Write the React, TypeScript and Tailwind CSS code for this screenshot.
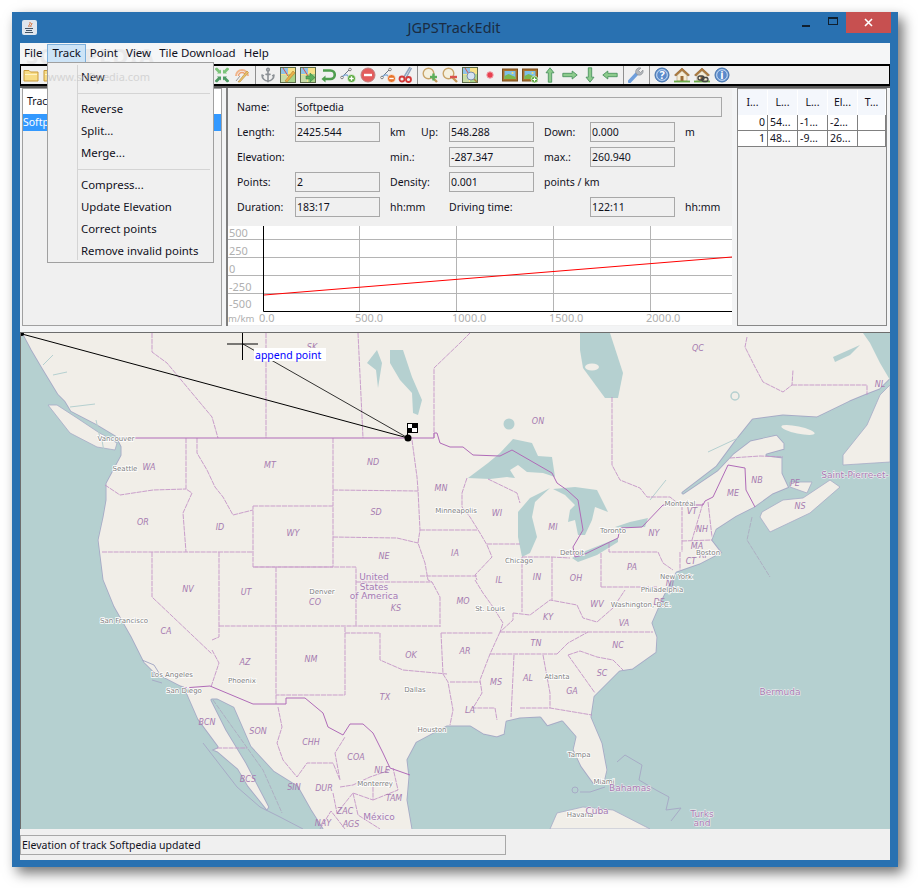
import type { ReactNode } from 'react'
import { Anchor } from 'lucide-react'

const LAND = '#f1eee8'
const WATER = '#b5d0d0'

const Ic = ({ children, w = 16 }: { children: ReactNode; w?: number }) => (
  <svg width={w} height={16} viewBox="0 0 16 16" fill="none">{children}</svg>
)

const Btn = ({ children, narrow }: { children: ReactNode; narrow?: boolean }) => (
  <div className={`flex shrink-0 items-center justify-center ${narrow ? 'w-[16px]' : 'w-[20px]'}`}>{children}</div>
)

const Sep = () => (
  <div className="flex w-[6px] shrink-0 justify-center"><div className="h-[18px] w-px bg-[#8f8f8f]" /></div>
)

const Folder = () => (
  <Ic>
    <path d="M1 3.500h5l1.500 1.500H15v9H1z" fill="#f7dc85" stroke="#c99a3a" />
    <path d="M2 7h12v1H2z" fill="#fff3c4" />
  </Ic>
)

const ArrowsIn = () => (
  <Ic>
    <path d="M1 1.500l2-1 3 3 1-1v4H3l1-1-3-3z" fill="#7cc47a" />
    <path d="M15 1.500l-2-1-3 3-1-1v4h4l-1-1 3-3z" fill="#7cc47a" />
    <path d="M1 14.500l2 1 3-3 1 1v-4H3l1 1-3 3z" fill="#4e9a63" />
    <path d="M15 14.500l-2 1-3-3-1 1v-4h4l-1 1 3 3z" fill="#4e9a63" />
  </Ic>
)

const Radar = () => (
  <Ic>
    <path d="M2 9a6 6 0 0 1 12 0" stroke="#f0b48a" strokeWidth="2" />
    <path d="M4.500 9a3.500 3.500 0 0 1 7 0" stroke="#eea070" strokeWidth="1.500" />
    <path d="M4 15L13 4l1.500 1.500L6 15z" fill="#e9c46a" stroke="#b8863a" strokeWidth=".6" />
    <path d="M2 14l4-5" stroke="#9a9a9a" />
  </Ic>
)

const MapTile = ({ children }: { children?: ReactNode }) => (
  <Ic>
    <rect x=".5" y=".5" width="15" height="15" fill="#f7e28a" stroke="#5f6e4c" />
    <rect x="1" y="1" width="7" height="6" fill="#8fc3e8" />
    <rect x="8" y="7" width="7" height="8" fill="#a9d48a" />
    <rect x="1" y="8" width="6" height="7" fill="#c8dca8" />
    <path d="M3 1l5 8" stroke="#d9534f" />
    {children}
  </Ic>
)

const Route = ({ plus }: { plus: boolean }) => (
  <Ic>
    <path d="M1 11L10 2" stroke="#6d7680" />
    <path d="M2 10c3-3 6-3 7 1" stroke="#7fa9d6" strokeWidth="1.400" />
    <circle cx="2" cy="10.500" r="1.300" fill="#fff" stroke="#555" strokeWidth=".7" />
    <circle cx="10" cy="2.500" r="1.300" fill="#fff" stroke="#555" strokeWidth=".7" />
    <circle cx="11.500" cy="11.500" r="4" fill={plus ? '#5aa83e' : '#e8742c'} stroke="#fff" strokeWidth=".6" />
    <path d="M9.300 11.500h4.400" stroke="#fff" strokeWidth="1.400" />
    {plus && <path d="M11.500 9.300v4.400" stroke="#fff" strokeWidth="1.400" />}
  </Ic>
)

const Lens = ({ plus }: { plus: boolean }) => (
  <Ic>
    <path d="M10 10l5 5" stroke="#c69a5a" strokeWidth="2.400" />
    <circle cx="6.500" cy="6.500" r="5.300" fill="#f5f1df" stroke="#c9a56a" strokeWidth="1.400" />
    <path d="M8 10h7" stroke={plus ? '#5cae5c' : '#d9534f'} strokeWidth="2.400" />
    {plus && <path d="M11.500 6.500v7" stroke="#5cae5c" strokeWidth="2.400" />}
  </Ic>
)

const Picture = ({ plus }: { plus?: boolean }) => (
  <Ic>
    <rect x=".5" y="2" width="15" height="12" fill="#a9712b" stroke="#7c4f1d" />
    <rect x="2.500" y="4" width="11" height="8" fill="#7fc0e6" />
    <path d="M2.500 12V9l4-2 7 3v2z" fill="#7bb84c" />
    <circle cx="10.500" cy="6" r="1" fill="#f6e27a" />
    {plus && (
      <>
        <circle cx="12.500" cy="12.500" r="3.400" fill="#5aa83e" stroke="#fff" strokeWidth=".6" />
        <path d="M10.500 12.500h4M12.500 10.500v4" stroke="#fff" strokeWidth="1.200" />
      </>
    )}
  </Ic>
)

const Arrow = ({ rot }: { rot: number }) => (
  <Ic>
    <g transform={`rotate(${rot} 8 8)`}>
      <path d="M8 .8l4 5H9.700v9.400H6.300V5.800H4z" fill="#8ccb8c" stroke="#3f8a55" strokeWidth=".8" />
    </g>
  </Ic>
)

const Globe = ({ children }: { children: ReactNode }) => (
  <Ic>
    <circle cx="8" cy="8" r="7" fill="#6d9bd6" stroke="#3f6ea8" />
    <circle cx="8" cy="8" r="5.300" fill="#5a8acb" stroke="#dce8f6" strokeWidth=".8" />
    {children}
  </Ic>
)

const Home = ({ link }: { link?: boolean }) => (
  <Ic>
    <path d="M8 1L.5 8 2 9 8 3.500 14 9l1.500-1z" fill="#b07a3a" stroke="#7c5220" strokeWidth=".5" />
    <path d="M3 8.500L8 4l5 4.500V14H3z" fill="#f5ecd6" stroke="#a58a62" strokeWidth=".5" />
    <rect x="6.500" y="9" width="3" height="5" fill="#9a6a35" />
    <path d="M0 14.500h16" stroke="#6cab4a" strokeWidth="1.800" />
    {link && (
      <>
        <rect x="4" y="9" width="6" height="4" rx="2" fill="none" stroke="#444" strokeWidth="1.300" />
        <rect x="8" y="10.500" width="6" height="4" rx="2" fill="none" stroke="#444" strokeWidth="1.300" />
      </>
    )}
  </Ic>
)

const water1 =
  '21,333 30,350 40,367 57,395 64,402 70,412 95,425 115,437 120,447 120,455 105,483 105,500 102,517 97,540 102,580 113,607 130,637 143,663 153,673 180,687 183,688 197,720 217,747 210,750 217,753 237,770 247,787 267,812 270,807 247,763 227,730 212,700 217,700 233,708 250,747 273,772 297,787 310,810 322,829 20,829 20,333'
const water2 =
  '413,829 408,800 410,777 408,760 417,743 447,727 470,727 483,735 497,738 505,735 507,722 520,719 540,718 547,727 562,722 575,737 572,750 580,767 593,785 605,783 608,770 603,743 592,717 595,697 620,672 633,670 657,653 658,637 653,623 663,600 673,580 677,573 700,565 723,553 713,540 717,530 737,517 755,508 773,495 790,488 783,473 783,457 767,455 785,450 785,443 777,434 750,440 733,453 717,470 683,493 717,467 737,440 753,420 783,416 817,418 850,402 867,395 880,390 890,380 890,829'

const lakes = [
  '468,478 488,463 500,453 513,439 532,443 538,456 552,457 555,477 543,473 527,472 518,465 510,470 515,478 507,477 490,479',
  '518,512 530,498 550,488 535,502 532,517 537,537 530,553 522,557 518,537',
  '553,489 575,487 597,490 608,512 595,507 592,520 585,535 578,535 575,520 568,522 570,510 575,505 565,495',
  '572,558 583,552 618,538 618,542 597,555 578,562',
  '615,527 630,522 648,518 645,527 623,528',
  '390,350 403,350 412,377 422,400 418,415 413,413 412,393 400,380 390,363',
  '367,363 377,350 382,363 378,388 376,370',
  '580,333 610,333 623,373 618,398 605,398 583,368 580,350',
  '863,333 890,333 890,380 880,363 870,343',
  '833,357 860,345 850,355 835,362',
]

const islands = [
  '48,405 57,405 77,418 98,432 117,443 115,450 97,447 70,433',
  '760,517 770,532 810,513 840,487 830,480 803,498 783,500 762,512',
  '880,395 890,385 890,462 843,465 843,455 867,425',
  '790,482 812,482 807,493 790,487',
  '550,829 557,813 583,807 613,810 650,829',
]

const intl = [
  '120,438 434,438 434,433 437,433 440,443 450,447 463,447 473,455 500,456 512,450 552,473 557,483 567,490 578,500 583,530 573,547 575,557 583,555 618,538 620,528 642,527 663,505 703,505 705,501 713,497 728,465 745,468 746,490 755,507',
  '183,688 210,686 253,704 286,704 286,698 305,698 323,713 328,727 343,735 350,724 363,724 373,733 383,753 390,768 410,775',
]

const borders = [
  '152,333 152,352 167,363 187,387 212,417 218,438',
  '266,333 266,438',
  '358,333 363,438',
  '434,438 434,368 460,343 470,333',
  '186,438 186,489 192,493 183,513 186,552',
  '105,485 120,495 153,490 186,489',
  '197,438 197,453 207,470 215,487 223,497 233,515 253,510',
  '253,506 333,506 333,567 253,567 253,506',
  '333,438 333,506',
  '333,490 418,491',
  '333,537 397,538 418,543',
  '412,440 417,477 418,490 420,530 418,543 425,563 428,580 432,582 440,597 440,627',
  '102,552 253,552',
  '219,552 219,626',
  '276,567 276,704',
  '253,567 356,567 356,626',
  '356,582 432,582',
  '219,626 440,626',
  '152,552 152,597 212,654',
  '212,640 219,637 219,626',
  '212,650 219,663 211,687',
  '345,627 345,695 276,695',
  '345,633 380,633 380,660 403,670 447,674',
  '441,633 443,674 448,682 453,710 450,725',
  '441,633 493,633',
  '500,632 653,632',
  '490,654 557,654',
  '557,654 568,643 588,632',
  '543,655 550,693 550,708',
  '514,655 511,717',
  '520,708 550,708 592,715',
  '568,655 595,693',
  '568,655 580,651 597,657 613,660 623,670',
  '500,632 490,654 480,680 482,693 473,708 495,708 497,720',
  '450,682 480,682',
  '513,613 530,615 550,600 577,605 583,618 597,622 613,608 625,590',
  '475,580 483,593 493,607 503,623 500,632 513,620 513,613',
  '522,557 522,612',
  '552,557 552,600',
  '601,553 601,587',
  '609,543 609,552 658,552 663,563 673,570',
  '601,587 657,587',
  '420,530 478,530',
  '467,478 462,493 462,507 470,517 480,533 487,545 492,557 475,575 477,580',
  '420,576 477,576',
  '487,544 520,544',
  '522,557 552,557 570,558',
  '488,479 517,493 520,503',
  '682,505 682,552',
  '703,503 692,540',
  '682,541 712,540',
  '680,552 680,570',
  '708,502 712,537',
  '612,397 612,465 620,480 640,488 647,497 670,497 680,505',
  '747,337 745,347 755,367 763,382 783,392 792,385 793,370',
  '792,385 867,385 867,395',
  '730,458 760,456 783,457',
  '217,748 247,748',
  '278,707 282,727 277,743 283,760 297,777 307,763 333,763 340,780 335,753 345,737',
  '340,787 353,785 370,777 390,770',
  '333,793 337,813 353,793 373,800 373,787',
  '353,793 358,815 380,829',
  '373,800 398,790 393,768',
  '320,829 331,811 345,829',
]

const states: [string, number, number][] = [
  ['SK', 312, 347], ['QC', 698, 348], ['WA', 149, 467], ['MT', 270, 465], ['ND', 373, 462], ['OR', 143, 522], ['ID', 220, 527],
  ['WY', 293, 533], ['SD', 376, 512], ['NE', 384, 556], ['MN', 441, 488], ['IA', 455, 553], ['ON', 538, 421], ['WI', 497, 513],
  ['MI', 553, 527], ['NY', 654, 533], ['VT', 692, 511], ['NH', 702, 529], ['MA', 697, 546], ['CT', 691, 561], ['RI', 703, 555],
  ['ME', 733, 493], ['NB', 757, 480], ['NS', 800, 506], ['PE', 795, 483], ['NL', 880, 384], ['PA', 632, 567], ['OH', 576, 578],
  ['IN', 537, 577], ['IL', 499, 580], ['MO', 463, 601], ['KY', 548, 617], ['WV', 597, 604], ['VA', 624, 623], ['NC', 618, 645],
  ['TN', 536, 643], ['AR', 465, 651], ['MS', 496, 682], ['AL', 528, 678], ['GA', 572, 691], ['SC', 602, 673], ['LA', 470, 710],
  ['DE', 659, 602], ['NJ', 670, 583], ['NV', 188, 589], ['UT', 246, 592], ['CO', 315, 602], ['KS', 396, 608], ['CA', 166, 631],
  ['AZ', 245, 662], ['NM', 311, 659], ['OK', 411, 655], ['TX', 385, 697], ['BCN', 207, 722], ['SON', 258, 731], ['CHH', 311, 742],
  ['COA', 356, 757], ['NLE', 382, 770], ['BCS', 248, 779], ['SIN', 294, 787], ['DUR', 324, 788], ['TAM', 394, 798], ['ZAC', 345, 811],
  ['NAY', 323, 823], ['AGS', 351, 824],
]

const cities: [string, number, number][] = [
  ['Vancouver', 116, 439], ['Seattle', 125, 469], ['Minneapolis', 456, 511], ['Denver', 322, 592], ['San Francisco', 124, 621],
  ['Los Angeles', 172, 675], ['San Diego', 184, 691], ['Phoenix', 242, 681], ['Dallas', 415, 690], ['Houston', 432, 730],
  ['Monterrey', 375, 784], ['Chicago', 519, 561], ['Detroit', 572, 553], ['Toronto', 613, 531], ['Montréal', 680, 504],
  ['Boston', 708, 553], ['New York', 676, 577], ['St. Louis', 490, 609], ['Atlanta', 557, 677], ['Philadelphia', 662, 590],
  ['Washington, D.C.', 641, 605], ['Tampa', 579, 755], ['Miami', 604, 782], ['Havana', 580, 815],
]

const countries: [string, number, number][] = [
  ['United', 374, 577], ['States', 374, 587], ['of America', 374, 596], ['México', 379, 817], ['Bahamas', 630, 788],
  ['Cuba', 597, 811], ['Turks', 702, 814], ['and', 702, 823], ['Bermuda', 780, 692], ['Saint-Pierre-et-', 855, 475],
]

function MapView() {
  return (
    <svg width={870} height={497} viewBox="20 332 870 497" className="block">
      <rect x="20" y="332" width="870" height="497" fill={LAND} />
      <polygon points={water1} fill={WATER} stroke="#a7abc6" strokeWidth="3" strokeLinejoin="round" />
      <polygon points={water1} fill={WATER} stroke={WATER} strokeWidth="1.200" strokeLinejoin="round" />
      <polygon points={water2} fill={WATER} stroke="#a7abc6" strokeWidth="3" strokeLinejoin="round" />
      <polygon points={water2} fill={WATER} stroke={WATER} strokeWidth="1.200" strokeLinejoin="round" />
      {islands.map((p) => <polygon key={p} points={p} fill={LAND} stroke="#a7abc6" strokeWidth=".8" />)}
      {lakes.map((p) => <polygon key={p} points={p} fill={WATER} />)}
      <circle cx="509" cy="424" r="5.500" fill={WATER} />
      <ellipse cx="592" cy="367" rx="7" ry="3.500" fill={LAND} />
      <ellipse cx="798" cy="430" rx="17" ry="3.500" fill={LAND} transform="rotate(12 798 430)" />
      <circle cx="735" cy="396" r="4" stroke={WATER} strokeWidth="1.500" fill="none" />
      <g fill="none" stroke={WATER} strokeWidth="1">
        <path d="M43 365l10-10M53 375l14-3 M70 407l25-3M96 420l4 18M102 440l3 18M650 500l16-20M708 452l30-14" />
      </g>
      <g fill="none" stroke="#a7abc6" strokeWidth="1">
        <path d="M203 743l34 44 23 20 20 10 23 12" />
        <path d="M617 762l8-7 17 10-3 15 17 10 13 7-3 13 15-2-10 13" />
        <path d="M580 792l10 0 15-5M572 790a3 3 0 1 0 6 0a3 3 0 1 0 -6 0" />
        <path d="M142 660l12 5 5 8-8 3M152 680l10 3" />
      </g>
      <path d="M213 700l50 70 19 43M752 517l-5 23 23 37" fill="none" stroke="#a9a0bc" strokeWidth=".7" strokeDasharray="5 1" />
      <g fill="none" stroke="#c391c6" strokeWidth="1" strokeDasharray="5 .8" opacity=".85">
        {borders.map((p) => <polyline key={p} points={p} />)}
      </g>
      <g fill="none" stroke="#b06bb8" strokeWidth="1">
        {intl.map((p) => <polyline key={p} points={p} />)}
      </g>
      <g className="font-['DejaVu_Sans'] text-[8px] italic" fill="#a67bb0" textAnchor="middle" dominantBaseline="central">
        {states.map(([t, x, y]) => <text key={t} x={x} y={y}>{t}</text>)}
      </g>
      <g className="font-['DejaVu_Sans'] text-[7px]" fill="#808080" stroke="#ffffff" strokeWidth="1.500" paintOrder="stroke" textAnchor="middle" dominantBaseline="central">
        {cities.map(([t, x, y]) => <text key={t} x={x} y={y}>{t}</text>)}
      </g>
      <g className="font-['DejaVu_Sans'] text-[9px]" fill="#a57ab0" stroke="#f4f1f4" strokeWidth="1" paintOrder="stroke" textAnchor="middle" dominantBaseline="central">
        {countries.map(([t, x, y]) => <text key={t} x={x} y={y}>{t}</text>)}
      </g>
      <path d="M22 334L408 438" stroke="#000" strokeWidth="1" />
      <path d="M243 344L408 438" stroke="#000" strokeWidth=".8" />
      <circle cx="22" cy="334" r="2" fill="#000" />
      <path d="M227 344h31M242.500 332v28" stroke="#000" strokeWidth="1" />
      <rect x="254" y="348" width="72" height="13" fill="#fff" />
      <text x="255" y="358.500" fill="#0000ff" className="font-['Noto_Sans'] text-[10.500px]">append point</text>
      <circle cx="408" cy="438" r="3.500" fill="#000" />
      <path d="M407.500 438v-15" stroke="#000" />
      <rect x="407.500" y="423.500" width="10" height="9" fill="#fff" stroke="#000" />
      <rect x="412" y="423.500" width="5.500" height="4.500" fill="#000" />
      <rect x="408" y="428" width="4" height="4.500" fill="#000" />
    </svg>
  )
}

function Chart() {
  const xs = [359.5, 456.5, 553.5, 650.5]
  const ys = [239.5, 257.5, 275.5, 293.5]
  return (
    <svg width={504} height={99} viewBox="228 226 504 99" className="block bg-white font-['Noto_Sans'] text-[11px]">
      {ys.map((y) => <path key={y} d={`M228 ${y}H732`} stroke="#b4b4b4" />)}
      {xs.map((x) => <path key={x} d={`M${x} 226V311`} stroke="#b4b4b4" />)}
      <path d="M263.500 226V311.500H732" fill="none" stroke="#000" />
      <path d="M264 295L732 257" stroke="#f00" strokeWidth="1" />
      <g fill="#b0b0b0">
        <text x="229" y="237">500</text>
        <text x="229" y="255">250</text>
        <text x="229" y="273">0</text>
        <text x="229" y="291">-250</text>
        <text x="229" y="308">-500</text>
        <text x="228" y="322" className="text-[9.500px]">m/km</text>
        <text x="259" y="322">0.0</text>
        <text x="355" y="322">500.0</text>
        <text x="452" y="322">1000.0</text>
        <text x="549" y="322">1500.0</text>
        <text x="646" y="322">2000.0</text>
      </g>
    </svg>
  )
}

const Field = ({ children, className = 'w-[85px]' }: { children?: ReactNode; className?: string }) => (
  <div className={`flex h-[20px] items-center border border-[#a8a8a8] bg-[#f0f0f0] px-[1px] ${className}`}>{children}</div>
)

const menuLabels = ['File', 'Track', 'Point', 'View', 'Tile Download', 'Help']
const cols = ['I...', 'L...', 'L...', 'El...', 'T...']
const rows = [
  ['0', '54...', '-1...', '-2...', ''],
  ['1', '48...', '-9...', '26...', ''],
]

export default function App() {
  return (
    <div className="h-[888px] w-[918px] overflow-hidden bg-white pl-[12px] pt-[12px] font-['Noto_Sans',sans-serif] text-[10.5px] leading-none text-[#10101c]">
      <div className="relative flex h-[855px] w-[886px] flex-col bg-[#2971b1] px-[8px] pb-[7px] shadow-[5px_6px_12px_rgba(0,0,0,0.55)]">
        {/* title bar */}
        <div className="relative flex h-[31px] shrink-0 items-center justify-center text-[14.5px] text-[#1b2c42]">
          <div className="absolute left-[2px] top-[8px] flex h-[15px] w-[15px] items-center justify-center rounded-[2px] bg-[#dfe6ee]">
            <svg width="11" height="13" viewBox="0 0 11 13" fill="none">
              <path d="M6 1c1 2-2 3-1 5M8 2c0 2-2 2-1 4" stroke="#d8672a" strokeWidth="1" />
              <path d="M1 7.500h8M2 9.500h6M1 11.500h8" stroke="#456" strokeWidth="1" />
            </svg>
          </div>
          <span className="pr-[2px]">JGPSTrackEdit</span>
          <div className="absolute right-[-1px] top-0 flex h-[21px] items-stretch">
            <div className="flex w-[27px] items-center justify-center pt-[6px]"><div className="h-[2px] w-[8px] bg-[#10202f]" /></div>
            <div className="flex w-[27px] items-center justify-center pb-[3px]"><div className="h-[8px] w-[10px] border border-t-2 border-[#10202f]" /></div>
            <div className="flex w-[45px] items-center justify-center bg-[#c75050]">
              <svg width="9" height="9" viewBox="0 0 9 9"><path d="M1 1l7 7M8 1L1 8" stroke="#fff" strokeWidth="1.600" /></svg>
            </div>
          </div>
        </div>

        {/* client area */}
        <div className="relative flex min-h-0 flex-1 flex-col bg-[#f3f4f5]">
          <div className="relative flex h-[20px] shrink-0 items-center bg-[#f5f6f7] text-[11.5px]">
            <span className="pointer-events-none absolute left-[6px] top-[1px] text-[22px] font-bold tracking-[1px] text-[#dedede] opacity-50">SOFTPEDIA</span>
            {menuLabels.map((m) => (
              <div key={m} className={`relative flex h-[19px] items-center border ${m === 'Track' ? 'ml-[1px] border-[#7db0dc] bg-[#cde4f7] px-[4px]' : 'border-transparent px-[3px]'}`}>
                {m}
              </div>
            ))}
          </div>

          <div className="mt-[1px] flex h-[22px] shrink-0 items-center border border-y-2 border-black bg-[#f0f0f0]">
            <Btn><Folder /></Btn>
            <Btn><Folder /></Btn>
            <div className="w-[151px] shrink-0" />
            <Btn><ArrowsIn /></Btn>
            <Btn><Radar /></Btn>
            <Sep />
            <Btn><Anchor size={16} color="#8b9095" strokeWidth={2.4} /></Btn>
            <Btn><MapTile><path d="M5 14L13 4l2 2-8 9z" fill="#e8b04a" stroke="#a8752a" strokeWidth=".5" /></MapTile></Btn>
            <Btn><MapTile><path d="M6 9h4V6l5 4.500-5 4.500v-3H6z" fill="#5cae5c" stroke="#2e7a3e" strokeWidth=".5" /></MapTile></Btn>
            <Btn>
              <Ic>
                <path d="M3 3.500h7.500a4 4 0 0 1 0 8.500H4" stroke="#4f9e4f" strokeWidth="2.600" />
                <path d="M5.500 8.500L1.500 12l4 3.500z" fill="#4f9e4f" />
              </Ic>
            </Btn>
            <Btn><Route plus /></Btn>
            <Btn>
              <Ic>
                <circle cx="8" cy="8" r="7" fill="#e35d5d" stroke="#bf7f7f" />
                <rect x="4" y="6.800" width="8" height="2.400" fill="#fff" />
              </Ic>
            </Btn>
            <Btn><Route plus={false} /></Btn>
            <Btn narrow>
              <Ic>
                <path d="M12 0L6 10M13.500 1L8 11" stroke="#8ea4be" strokeWidth="1.500" />
                <circle cx="4" cy="12" r="2.500" stroke="#d33a3a" strokeWidth="1.800" />
                <circle cx="10.500" cy="12.500" r="2.500" stroke="#d33a3a" strokeWidth="1.800" />
              </Ic>
            </Btn>
            <Sep />
            <Btn><Lens plus /></Btn>
            <Btn><Lens plus={false} /></Btn>
            <Btn><MapTile><circle cx="9" cy="9" r="4" fill="#d5e3f2" stroke="#7b8fa8" /><path d="M12 12l3 3" stroke="#b08040" strokeWidth="1.500" /></MapTile></Btn>
            <Btn>
              <Ic>
                <circle cx="8" cy="8" r="3.200" fill="#e8404f" stroke="#f2a0a8" strokeWidth="1" />
              </Ic>
            </Btn>
            <Btn><Picture /></Btn>
            <Btn><Picture plus /></Btn>
            <Btn><Arrow rot={0} /></Btn>
            <Btn><Arrow rot={90} /></Btn>
            <Btn><Arrow rot={180} /></Btn>
            <Btn><Arrow rot={270} /></Btn>
            <Sep />
            <Btn>
              <Ic>
                <path d="M1.500 14.500L9 6.500" stroke="#6f9fdc" strokeWidth="3.400" strokeLinecap="round" />
                <path d="M8 6.500a4 4 0 0 1 5-5.500L10.500 3.500l2 2L15 3a4 4 0 0 1-5 5z" fill="#b4b8bd" stroke="#85898e" strokeWidth=".6" />
              </Ic>
            </Btn>
            <Sep />
            <Btn>
              <Globe><text x="8" y="11.800" textAnchor="middle" fill="#fff" className="text-[11px] font-bold">?</text></Globe>
            </Btn>
            <Btn><Home /></Btn>
            <Btn><Home link /></Btn>
            <Btn>
              <Globe><text x="8" y="11.800" textAnchor="middle" fill="#fff" className="text-[11px] font-bold">i</text></Globe>
            </Btn>
          </div>

          {/* upper split */}
          <div className="flex h-[246px] shrink-0 border-t-2 border-[#5c5c5c] pl-[2px]">
            <div className="flex h-[238px] w-[200px] shrink-0 flex-col overflow-hidden border border-[#a0a0a0] bg-[#f0f0f0]">
              <div className="flex h-[25px] shrink-0 items-center bg-white pl-[4px]">Track</div>
              <div className="flex h-[17px] shrink-0 items-center bg-[#3399ff] text-white">Softpedia</div>
            </div>
            <div className="ml-[4px] flex h-[238px] w-[506px] shrink-0 flex-col border-l-2 border-[#7f7f7f] bg-[#f0f0f0]">
              <div className="grid h-[138px] shrink-0 grid-cols-[58px_95px_59px_95px_46px_95px_1fr] content-start items-center gap-y-[5px] pl-[9px] pt-[9px]">
                <span>Name:</span>
                <Field className="col-span-6 w-[427px]">Softpedia</Field>

                <span>Length:</span>
                <Field>2425.544</Field>
                <span className="flex justify-between pr-[11px]"><span>km</span><span>Up:</span></span>
                <Field>548.288</Field>
                <span>Down:</span>
                <Field>0.000</Field>
                <span>m</span>

                <span>Elevation:</span>
                <span />
                <span>min.:</span>
                <Field>-287.347</Field>
                <span>max.:</span>
                <Field>260.940</Field>
                <span />

                <span>Points:</span>
                <Field>2</Field>
                <span>Density:</span>
                <Field>0.001</Field>
                <span className="col-span-3">points / km</span>

                <span>Duration:</span>
                <Field>183:17</Field>
                <span>hh:mm</span>
                <span className="col-span-2">Driving time:</span>
                <Field>122:11</Field>
                <span>hh:mm</span>
              </div>
              <Chart />
            </div>
            <div className="ml-[3px] w-[2px] shrink-0" />
            <div className="h-[238px] w-[150px] shrink-0 border border-[#888] bg-[#f0f0f0]">
              <div className="grid grid-cols-[30px_30px_30px_30px_28px] pt-[1px]">
                {cols.map((c, i) => (
                  <div key={i} className="flex h-[25px] items-center justify-center border-r border-[#fff] bg-[#f4f7fc]">{c}</div>
                ))}
                {rows.map((r) =>
                  r.map((v, i) => (
                    <div key={`${r[0]}${i}`} className={`flex h-[16px] items-center border-b border-r border-[#808080] bg-white px-[2px] ${i === 0 ? 'justify-end' : ''}`}>
                      {v}
                    </div>
                  )),
                )}
              </div>
            </div>
          </div>

          <div className="h-[497px] shrink-0 overflow-hidden border-l border-t border-[#6d6d6d] [&>svg]:-ml-px [&>svg]:-mt-px">
            <MapView />
          </div>

          <div className="flex flex-1 items-start bg-[#f0f0f0] pt-[6px]">
            <div className="flex h-[20px] w-[486px] items-center border border-[#a8a8a8] pl-[1px]">Elevation of track Softpedia updated</div>
          </div>

          {/* open Track menu */}
          <div className="absolute left-[27px] top-[19px] h-[201px] w-[167px] border border-[#a0a0a0] bg-[#f0f0f0] pt-[3px] text-[11.4px]">
            <div className="absolute bottom-[2px] left-[29px] top-[2px] w-px bg-[#d4d4d4]" />
            {[
              'New', null, 'Reverse', 'Split...', 'Merge...', null, 'Compress...', 'Update Elevation', 'Correct points', 'Remove invalid points',
            ].map((item, i) =>
              item ? (
                <div key={i} className="flex h-[22px] items-center pl-[33px]">{item}</div>
              ) : (
                <div key={i} className="flex h-[10px] items-center pl-[30px] pr-[3px]"><div className="h-px w-full bg-[#d4d4d4]" /></div>
              ),
            )}
            <span className="absolute left-0 top-[8px] text-[11px] text-[#c9c9c9] opacity-70">www.softpedia.com</span>
          </div>
        </div>
      </div>
    </div>
  )
}
